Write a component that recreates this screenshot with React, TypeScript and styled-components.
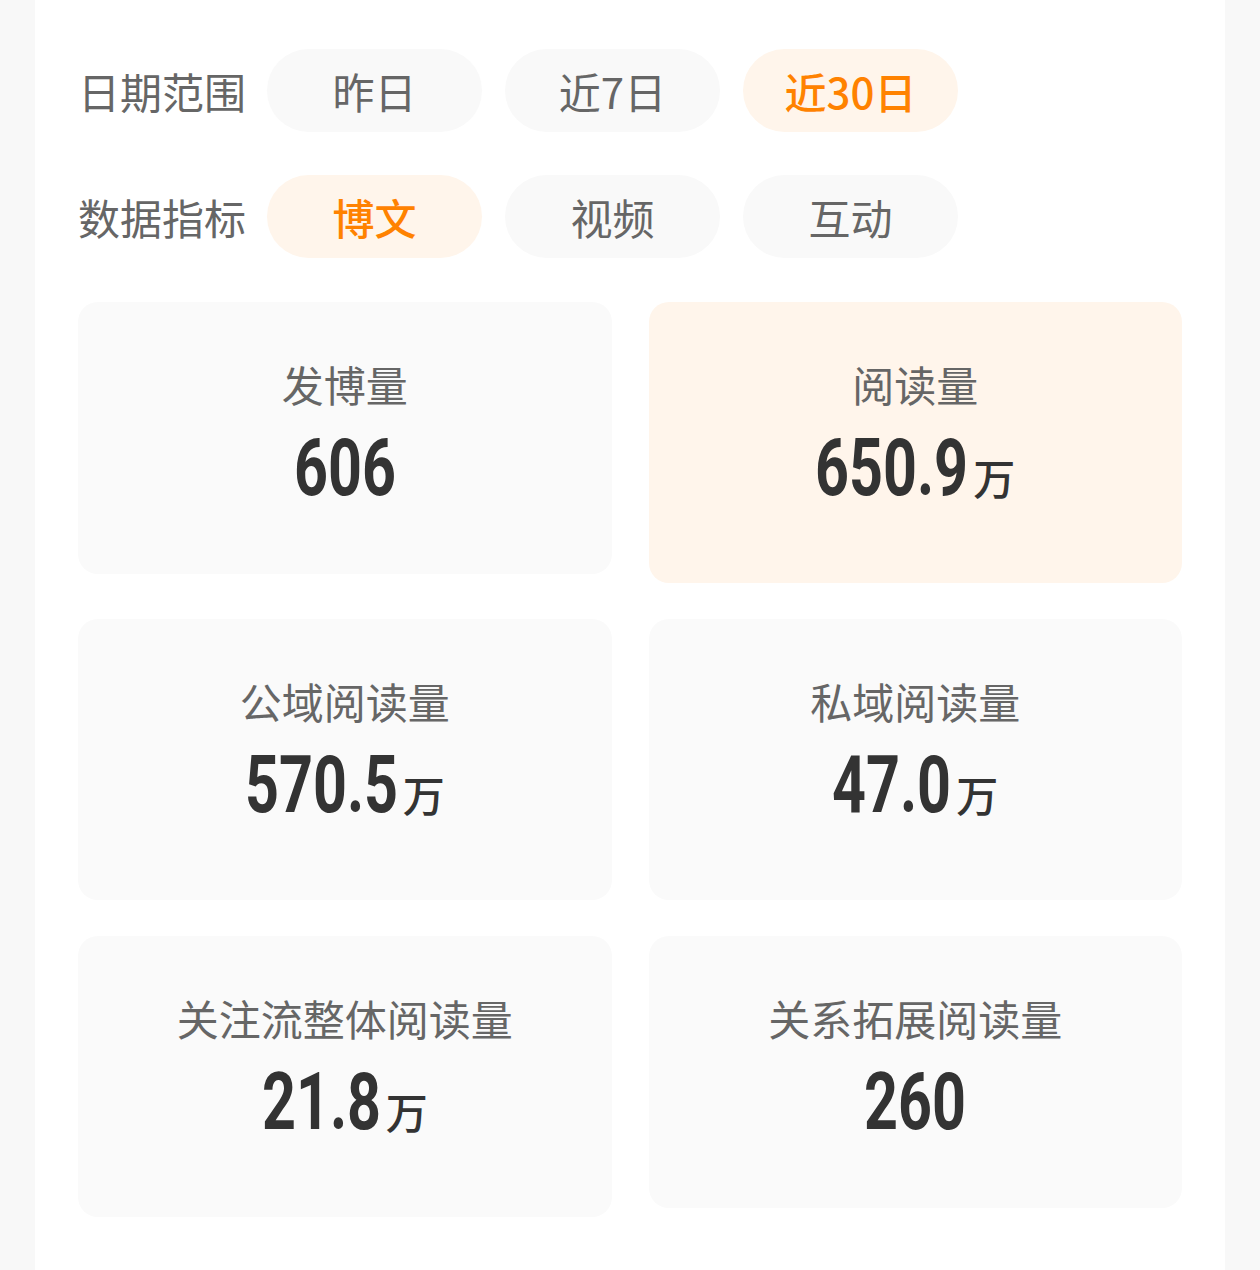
import React, { useLayoutEffect, useRef, useState } from "react";
import styled, { createGlobalStyle } from "styled-components";

const NUMBER_SCALE = 0.74;

const GlobalStyle = createGlobalStyle`
  html, body {
    margin: 0;
    padding: 0;
    background: #f8f8f8;
  }
  body {
    font-family: "Noto Sans CJK SC", "Noto Sans", sans-serif;
  }
`;

const Panel = styled.main`
  box-sizing: border-box;
  width: 1190px;
  min-height: 1270px;
  margin: 0 auto;
  padding: 49px 43px 40px;
  background: #fff;
`;

const Filters = styled.div`
  display: flex;
  flex-direction: column;
  gap: 43px;
`;

const FilterRow = styled.div`
  display: flex;
  align-items: center;
`;

const FilterLabel = styled.span`
  margin-right: 21px;
  font-size: 42px;
  line-height: 56px;
  color: #666;
  white-space: nowrap;
`;

const Chips = styled.div`
  display: flex;
  gap: 23px;
`;

const Chip = styled.button<{ $active?: boolean }>`
  width: 215px;
  height: 83px;
  padding: 0;
  border: none;
  border-radius: 42px;
  background: ${({ $active }) => ($active ? "#fff5eb" : "#f9f9f9")};
  color: ${({ $active }) => ($active ? "#ff8200" : "#666")};
  font-family: inherit;
  font-size: 42px;
  font-weight: ${({ $active }) => ($active ? 500 : 400)};
  line-height: 1;
  cursor: pointer;
`;

const Grid = styled.section`
  display: grid;
  grid-template-columns: 1fr 1fr;
  column-gap: 37px;
  row-gap: 36px;
  align-items: start;
  margin-top: 44px;
`;

const Card = styled.div<{ $active?: boolean }>`
  padding: 54px 0 66px;
  border-radius: 20px;
  background: ${({ $active }) => ($active ? "#fff5eb" : "#fafafa")};
  text-align: center;
`;

const CardTitle = styled.div`
  font-size: 42px;
  line-height: 56px;
  color: #666;
`;

const Value = styled.div`
  margin-top: 8px;
  font-size: 80px;
  line-height: 80px;
  color: #333;
  white-space: nowrap;
`;

const Digits = styled.span`
  display: inline-block;
  font-family: Roboto, "Liberation Sans", sans-serif;
  font-weight: 700;
  transform: scaleX(${NUMBER_SCALE});
  transform-origin: left center;
`;

const Unit = styled.span`
  margin-left: 5px;
  font-family: "Noto Sans CJK SC", sans-serif;
  font-size: 42px;
  font-weight: 500;
  line-height: 80px;
`;

const Number = ({ text }: { text: string }) => {
  const ref = useRef<HTMLSpanElement>(null);
  const [shrink, setShrink] = useState(0);

  useLayoutEffect(() => {
    const measure = () => {
      if (ref.current) setShrink(ref.current.offsetWidth * (1 - NUMBER_SCALE));
    };
    measure();
    document.fonts?.ready.then(measure);
  }, [text]);

  return (
    <Digits ref={ref} style={{ marginRight: -shrink }}>
      {text}
    </Digits>
  );
};

const dateRanges = ["昨日", "近7日", "近30日"];
const metrics = ["博文", "视频", "互动"];

const stats = [
  { title: "发博量", value: "606" },
  { title: "阅读量", value: "650.9", unit: "万", active: true },
  { title: "公域阅读量", value: "570.5", unit: "万" },
  { title: "私域阅读量", value: "47.0", unit: "万" },
  { title: "关注流整体阅读量", value: "21.8", unit: "万" },
  { title: "关系拓展阅读量", value: "260" },
];

const App = () => {
  const [range, setRange] = useState("近30日");
  const [metric, setMetric] = useState("博文");

  return (
    <>
      <GlobalStyle />
      <Panel>
        <Filters>
          <FilterRow>
            <FilterLabel>日期范围</FilterLabel>
            <Chips>
              {dateRanges.map((r) => (
                <Chip key={r} $active={r === range} onClick={() => setRange(r)}>
                  {r}
                </Chip>
              ))}
            </Chips>
          </FilterRow>
          <FilterRow>
            <FilterLabel>数据指标</FilterLabel>
            <Chips>
              {metrics.map((m) => (
                <Chip key={m} $active={m === metric} onClick={() => setMetric(m)}>
                  {m}
                </Chip>
              ))}
            </Chips>
          </FilterRow>
        </Filters>

        <Grid>
          {stats.map((s) => (
            <Card key={s.title} $active={s.active}>
              <CardTitle>{s.title}</CardTitle>
              <Value>
                <Number text={s.value} />
                {s.unit && <Unit>{s.unit}</Unit>}
              </Value>
            </Card>
          ))}
        </Grid>
      </Panel>
    </>
  );
};

export default App;
